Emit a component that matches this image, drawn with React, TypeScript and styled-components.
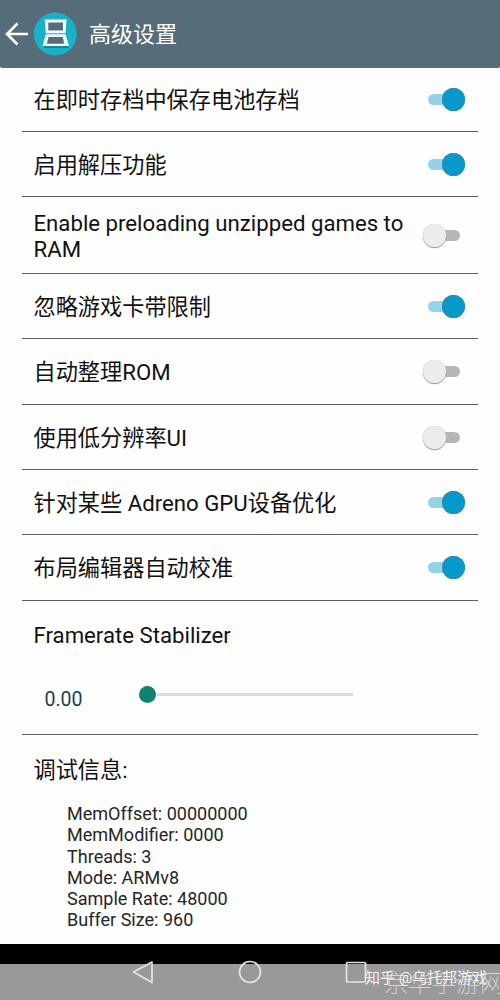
import React from "react";
import styled, { createGlobalStyle } from "styled-components";

const GlobalStyle = createGlobalStyle`
  * { box-sizing: border-box; }
  body { margin: 0; background: #fff; font-family: Roboto, "Noto Sans CJK SC", sans-serif; }
`;

const Screen = styled.div`
  position: relative;
  width: 500px;
  height: 1000px;
  overflow: hidden;
  display: flex;
  flex-direction: column;
  background: #fefefe;
`;

const Header = styled.header`
  height: 68px;
  flex: none;
  display: flex;
  align-items: center;
  background: #566d79;
  border-radius: 0 0 2px 2px;
  padding: 0 0 1px 4px;
`;

const BackIcon = styled.svg`
  width: 26px;
  height: 26px;
  flex: none;
`;

const Logo = styled.svg`
  width: 44px;
  height: 44px;
  margin-left: 3px;
  flex: none;
`;

const Title = styled.h1`
  margin: 2px 0 0 12px;
  font-size: 22px;
  line-height: 30px;
  font-weight: 400;
  color: #fff;
`;

const Settings = styled.main`
  flex: 1;
  padding: 0 22px;
`;

const Row = styled.div<{ $height: number }>`
  height: ${(p) => p.$height}px;
  padding: 0 12px 0 11.5px;
  display: flex;
  align-items: center;
  justify-content: space-between;
  border-bottom: 1px solid #606060;
`;

const Label = styled.span<{ $drop?: number }>`
  font-size: 22.2px;
  line-height: 26px;
  color: #111;
  max-width: 380px;
  padding-top: ${(p) => p.$drop ?? 0}px;
`;

const Toggle = styled.span<{ $on: boolean }>`
  width: 44px;
  height: 24px;
  flex: none;
  display: flex;
  align-items: center;
  justify-content: ${(p) => (p.$on ? "flex-end" : "flex-start")};
  margin-right: ${(p) => (p.$on ? 1 : -1)}px;
`;

const Track = styled.span<{ $on: boolean }>`
  width: 28px;
  height: 11px;
  border-radius: 6px;
  flex: none;
  background: ${(p) => (p.$on ? "#94d3e7" : "#b6b6b6")};
  margin: ${(p) => (p.$on ? "0 -14px 0 0" : "0 0 0 -14px")};
  order: ${(p) => (p.$on ? 0 : 1)};
`;

const Knob = styled.span<{ $on: boolean }>`
  width: 23px;
  height: 23px;
  border-radius: 50%;
  flex: none;
  z-index: 1;
  background: ${(p) => (p.$on ? "#0998cc" : "#ececec")};
  box-shadow: ${(p) =>
    p.$on ? "inset 0 0 1px 1px #2b8fb4" : "0 1px 1px #999, 0 0 1px #bbb"};
`;

const SliderSection = styled.section`
  height: 134px;
  padding: 21px 11.5px 0;
  border-bottom: 1px solid #606060;
`;

const SliderLine = styled.div`
  display: flex;
  align-items: center;
  margin-top: 33px;
  height: 30px;
`;

const SliderValue = styled.span`
  width: 95px;
  padding: 8px 0 0 11px;
  font-size: 19.5px;
  line-height: 24px;
  color: #153f5a;
`;

const SliderTrack = styled.div`
  width: 214px;
  height: 17px;
  margin: 0 0 3px 10.5px;
  display: flex;
  align-items: center;
`;

const SliderKnob = styled.span`
  width: 17px;
  height: 17px;
  border-radius: 50%;
  background: #118272;
`;

const SliderRest = styled.span`
  flex: 1;
  height: 3px;
  margin-left: 1px;
  background: #dcdcdc;
`;

const DebugSection = styled.section`
  padding: 22px 11.5px 0;
`;

const DebugList = styled.ul`
  list-style: none;
  margin: 20px 0 0;
  padding: 0 0 0 33.5px;
  font-size: 18.05px;
  line-height: 21.25px;
  color: #262626;
`;

const NavBar = styled.nav`
  flex: none;
  height: 56px;
  display: flex;
  background: linear-gradient(#000 0 20px, #999 20px);
`;

const NavIcons = styled.svg`
  width: 500px;
  height: 56px;
`;

const Credit = styled.span`
  position: absolute;
  left: 365px;
  top: 968px;
  font-size: 15px;
  line-height: 20px;
  white-space: nowrap;
  color: #f4f4f4;
`;

const SiteMark = styled.span`
  position: absolute;
  left: 384px;
  top: 969px;
  font-size: 24px;
  line-height: 30px;
  font-weight: 100;
  white-space: nowrap;
  color: #e2e2e2;
`;

const options = [
  { label: "在即时存档中保存电池存档", on: true, height: 64, drop: 0 },
  { label: "启用解压功能", on: true, height: 65, drop: 2 },
  { label: "Enable preloading unzipped games to RAM", on: false, height: 77, drop: 2 },
  { label: "忽略游戏卡带限制", on: true, height: 65, drop: 2 },
  { label: "自动整理ROM", on: false, height: 66, drop: 0 },
  { label: "使用低分辨率UI", on: false, height: 65, drop: 2 },
  { label: "针对某些 Adreno GPU设备优化", on: true, height: 65, drop: 2 },
  { label: "布局编辑器自动校准", on: true, height: 66, drop: 1 },
];

const debugInfo = [
  "MemOffset: 00000000",
  "MemModifier: 0000",
  "Threads: 3",
  "Mode: ARMv8",
  "Sample Rate: 48000",
  "Buffer Size: 960",
];

export default function App() {
  return (
    <>
      <GlobalStyle />
      <Screen>
        <Header>
          <BackIcon viewBox="0 0 26 26" fill="none" stroke="#fff" strokeWidth="2.6">
            <path d="M24 13H3.5M13.5 2.5L3 13L13.5 23.5" />
          </BackIcon>
          <Logo viewBox="0 0 44 44">
            <circle cx="22.3" cy="22" r="21.5" fill="#18b2c8" />
            <path d="M11 35H35.5" fill="none" stroke="#0c7f93" strokeWidth="1.6" />
            <path fill="#f4fcfd" d="M11.8 7.5H33.5L32.5 21.3H12.8ZM12.8 22.3H32.5L36 34H9.5Z" />
            <path fill="#566d79" d="M15.3 10.5H30V18.5H15.3ZM15.7 25H29.8L31.2 31.8H13.8Z" />
          </Logo>
          <Title>高级设置</Title>
        </Header>
        <Settings>
          {options.map((o) => (
            <Row key={o.label} $height={o.height}>
              <Label $drop={o.drop}>{o.label}</Label>
              <Toggle $on={o.on}>
                <Track $on={o.on} />
                <Knob $on={o.on} />
              </Toggle>
            </Row>
          ))}
          <SliderSection>
            <Label>Framerate Stabilizer</Label>
            <SliderLine>
              <SliderValue>0.00</SliderValue>
              <SliderTrack>
                <SliderKnob />
                <SliderRest />
              </SliderTrack>
            </SliderLine>
          </SliderSection>
          <DebugSection>
            <Label>调试信息:</Label>
            <DebugList>
              {debugInfo.map((line) => (
                <li key={line}>{line}</li>
              ))}
            </DebugList>
          </DebugSection>
        </Settings>
        <NavBar>
          <NavIcons viewBox="0 0 500 56" fill="none" stroke="#e4e4e4" strokeWidth="1.7">
            <path d="M152 18L133.5 28L152 38.5Z" strokeLinejoin="round" />
            <circle cx="250" cy="28" r="10.5" />
            <rect x="346.5" y="18.5" width="19" height="19.5" rx="1" />
          </NavIcons>
        </NavBar>
        <SiteMark>京华手游网</SiteMark>
        <Credit>知乎 @乌托邦游戏</Credit>
      </Screen>
    </>
  );
}
